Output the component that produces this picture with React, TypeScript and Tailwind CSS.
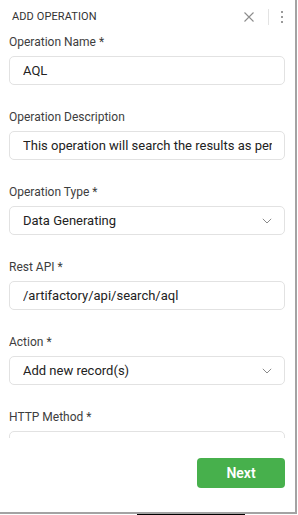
import React from "react";

const Chevron = () => (
  <svg width="10" height="6" viewBox="0 0 10 6" fill="none" className="shrink-0">
    <path d="M0.8 0.8 L5 5 L9.2 0.8" stroke="#8a8a8a" strokeWidth="1" />
  </svg>
);

function Field({ label, value, select }: { label: string; value?: string; select?: boolean }) {
  return (
    <div className="flex flex-col">
      <div className="h-[16px] leading-[16px] text-[12px] text-[#3d3d3d]">{label}</div>
      <div className="mt-[6px] h-[29px] rounded-[5px] border border-[#e2e2e2] bg-white flex items-center pl-[13px] pr-[12px] overflow-hidden">
        <span className="flex-1 whitespace-nowrap overflow-hidden text-[13px] text-[#222]">{value}</span>
        {select && <Chevron />}
      </div>
    </div>
  );
}

export default function App() {
  return (
    <div className="relative w-[298px] h-[515px] bg-white" style={{ fontFamily: "Roboto, 'Noto Sans', sans-serif" }}>
      <div className="flex flex-col w-[297px] h-[514px] border-r-2 border-b-2 border-[#a3a3a3] bg-white">
        <div className="h-[34px] shrink-0 flex items-center pl-[12px] pr-[12px]">
          <span className="flex-1 text-[11px] text-[#333] tracking-[0.1px]">ADD OPERATION</span>
          <svg width="10" height="10" viewBox="0 0 10 10" className="mr-[14px]">
            <path d="M0.5 0.5 L9.5 9.5 M9.5 0.5 L0.5 9.5" stroke="#8d8d8d" strokeWidth="1.1" />
          </svg>
          <div className="w-px h-[16px] bg-[#e3e3e3] mr-[11px]" />
          <div className="flex flex-col gap-[3px] items-center w-[3px]">
            <div className="w-[2px] h-[2px] bg-[#9a9a9a]" />
            <div className="w-[2px] h-[2px] bg-[#9a9a9a]" />
            <div className="w-[2px] h-[2px] bg-[#9a9a9a]" />
          </div>
        </div>
        <div className="h-[404px] shrink-0 overflow-hidden pl-[9px] pr-[10px] flex flex-col gap-[24px]">
          <Field label="Operation Name *" value="AQL" />
          <Field label="Operation Description" value="This operation will search the results as per" />
          <Field label="Operation Type *" value="Data Generating" select />
          <Field label="Rest API *" value="/artifactory/api/search/aql" />
          <Field label="Action *" value="Add new record(s)" select />
          <Field label="HTTP Method *" value="" select />
        </div>
        <div className="flex-1 flex justify-end items-start pt-[20px] pr-[10px]">
          <button className="w-[88px] h-[30px] rounded-[4px] bg-[#47b04c] text-white text-[14px] font-semibold">Next</button>
        </div>
      </div>
      <div className="absolute left-[137px] top-[514px] w-[108px] h-[1px] bg-black" />
    </div>
  );
}
